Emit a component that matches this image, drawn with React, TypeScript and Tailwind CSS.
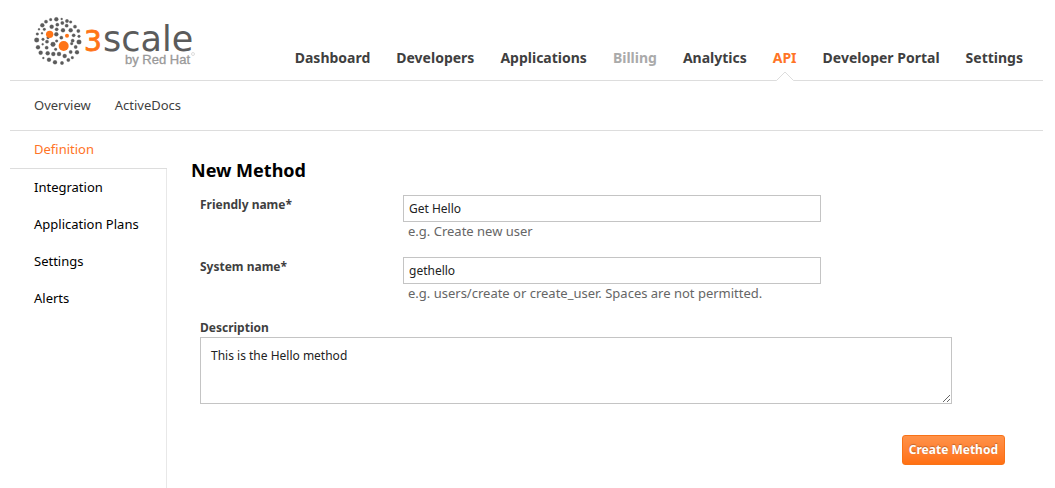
import { useState } from "react";

const DARK_DOTS = [
  [79, 28, 6], [62, 29, 4], [95, 27, 3], [111, 33, 5], [122, 36, 4], [48, 35, 5], [37, 46, 6], [65, 50, 6],
  [82, 44, 5], [97, 39, 5], [110, 47, 5], [135, 50, 5], [27, 58, 3], [43, 58, 4], [80, 58, 5], [99, 61, 6],
  [122, 61, 6], [145, 63, 5], [22, 72, 4], [36, 70, 3], [79, 73, 6], [94, 83, 5], [131, 76, 5], [147, 79, 4],
  [20, 90, 7], [39, 88, 4], [54, 83, 4], [51, 95, 5], [80, 93, 4], [69, 103, 7], [128, 92, 5], [147, 96, 7],
  [125, 101, 4], [38, 103, 3], [24, 112, 6], [50, 113, 5], [77, 118, 4], [32, 128, 6], [53, 130, 6], [141, 127, 6],
  [70, 132, 6], [87, 132, 6], [122, 126, 5], [104, 138, 6], [40, 144, 3], [57, 149, 6], [75, 157, 6], [96, 159, 5],
  [115, 150, 5], [127, 143, 4], [137, 111, 5],
];

const ORANGE_DOTS = [
  [59, 73, 11],
  [111, 77, 6],
  [101, 108, 15],
];

const MAIN_NAV = ["Dashboard", "Developers", "Applications", "Billing", "Analytics", "API", "Developer Portal", "Settings"];
const SUB_NAV = ["Overview", "ActiveDocs"];
const SIDE_NAV = ["Definition", "Integration", "Application Plans", "Settings", "Alerts"];

function Logo() {
  return (
    <svg width="172" height="60" viewBox="0 0 172 60" role="img" aria-label="3scale by Red Hat">
      <g transform="scale(0.3333)">
        {DARK_DOTS.map(([x, y, r]) => (
          <circle key={`${x}-${y}`} cx={x} cy={y} r={r} fill="#5b5b5b" stroke="#5b5b5b" strokeWidth="0.8" />
        ))}
        {ORANGE_DOTS.map(([x, y, r]) => (
          <circle key={`${x}-${y}`} cx={x} cy={y} r={r} fill="#ff7416" />
        ))}
      </g>
      <text x="54" y="41" fontFamily="'DejaVu Sans', sans-serif" fontSize="28" fill="#ff7416" stroke="#ff7416" strokeWidth="0.8">3</text>
      <text x="73" y="41" fontFamily="'DejaVu Sans', sans-serif" fontSize="35" fill="#5b5b5b">scale</text>
      <text x="95" y="54" fontFamily="'Liberation Sans', sans-serif" fontSize="13" fill="#999999" stroke="#999999" strokeWidth="0.3">by Red Hat</text>
      <circle cx="163" cy="44" r="1.5" fill="none" stroke="#bbbbbb" strokeWidth="0.5" />
    </svg>
  );
}

function navColor(item: string) {
  if (item === "API") return "text-[#ff7426]";
  if (item === "Billing") return "text-[#aaaaaa]";
  return "text-[#3f3f3f]";
}

export default function App() {
  const [name, setName] = useState("Get Hello");
  const [systemName, setSystemName] = useState("gethello");
  const [description, setDescription] = useState("This is the Hello method");

  return (
    <div className="flex min-h-screen flex-col bg-white pr-3 pl-[10px] font-['Noto_Sans','Open_Sans',sans-serif] text-[13px] leading-5 text-[#3f3f3f]">
      {/* Header */}
      <header className="flex items-start justify-between border-b border-[#dddddd] pr-5 pl-5">
        <a href="#" className="mt-[10px] shrink-0">
          <Logo />
        </a>
        <nav className="mt-12 flex gap-[26px] text-[14px] font-bold">
          {MAIN_NAV.map((item) => (
            <a key={item} href="#" className={`relative h-8 whitespace-nowrap ${navColor(item)}`}>
              {item}
              {item === "API" && (
                <svg className="absolute -bottom-px left-1/2 -translate-x-1/2" width="18" height="10" viewBox="0 0 18 10">
                  <path d="M0.5 9.5L9 1L17.5 9.5V10H0.5Z" fill="#fff" />
                  <path d="M0.5 9.5L9 1L17.5 9.5" fill="none" stroke="#dddddd" />
                </svg>
              )}
            </a>
          ))}
        </nav>
      </header>

      {/* Sub navigation */}
      <nav className="flex gap-6 border-b border-[#dddddd] px-6 pt-[14px] pb-[15px]">
        {SUB_NAV.map((item) => (
          <a key={item} href="#">{item}</a>
        ))}
      </nav>

      <div className="flex flex-1">
        {/* Sidebar */}
        <aside className="flex w-[157px] shrink-0 flex-col text-black">
          <a href="#" className="border-b border-[#dddddd] px-6 pt-2 pb-[9px] text-[#ff7426]">
            {SIDE_NAV[0]}
          </a>
          <nav className="flex flex-1 flex-col border-r border-[#e8e8e8]">
            {SIDE_NAV.slice(1).map((item) => (
              <a key={item} href="#" className="pt-2 pb-[9px] pl-6 whitespace-nowrap">{item}</a>
            ))}
          </nav>
        </aside>

        {/* New method form */}
        <main className="flex-1 pt-[27px] pl-6">
          <h1 className="text-[18px] leading-6 font-bold text-black">New Method</h1>
          <form className="mt-[13px] pr-2 pl-[9px]" onSubmit={(e) => e.preventDefault()}>
            <div className="flex">
              <label htmlFor="name" className="w-[203px] shrink-0 text-[12px] font-bold">Friendly name*</label>
              <div className="w-1/2">
                <input
                  id="name"
                  className="block h-[27px] w-full border border-[#c4c4c4] px-[5px] text-[12px] text-[#222222]"
                  value={name}
                  onChange={(e) => setName(e.target.value)}
                />
                <p className="pl-[5px] leading-[18px] text-[#666666]">e.g. Create new user</p>
              </div>
            </div>

            <div className="mt-[17px] flex">
              <label htmlFor="system-name" className="w-[203px] shrink-0 text-[12px] font-bold">System name*</label>
              <div className="w-1/2">
                <input
                  id="system-name"
                  className="block h-[27px] w-full border border-[#c4c4c4] px-[5px] text-[12px] text-[#222222]"
                  value={systemName}
                  onChange={(e) => setSystemName(e.target.value)}
                />
                <p className="pl-[5px] leading-[18px] text-[#666666]">e.g. users/create or create_user. Spaces are not permitted.</p>
              </div>
            </div>

            <div className="mt-[17px] flex flex-col">
              <label htmlFor="description" className="text-[12px] leading-[18px] font-bold">Description</label>
              <textarea
                id="description"
                className="h-[67px] w-9/10 border border-[#c4c4c4] px-[10px] py-2 text-[12px] text-[#222222]"
                value={description}
                onChange={(e) => setDescription(e.target.value)}
              />
            </div>

            <div className="mt-[31px] mr-[30px] flex justify-end">
              <button
                type="submit"
                className="h-[30px] rounded-[3px] border border-[#f87217] bg-linear-to-b from-[#ff9248] to-[#ff7011] px-[6px] text-[12px] font-bold whitespace-nowrap text-white text-shadow-[0_-1px_1px_rgb(0_0_0/0.25)]"
              >
                Create Method
              </button>
            </div>
          </form>
        </main>
      </div>
    </div>
  );
}
